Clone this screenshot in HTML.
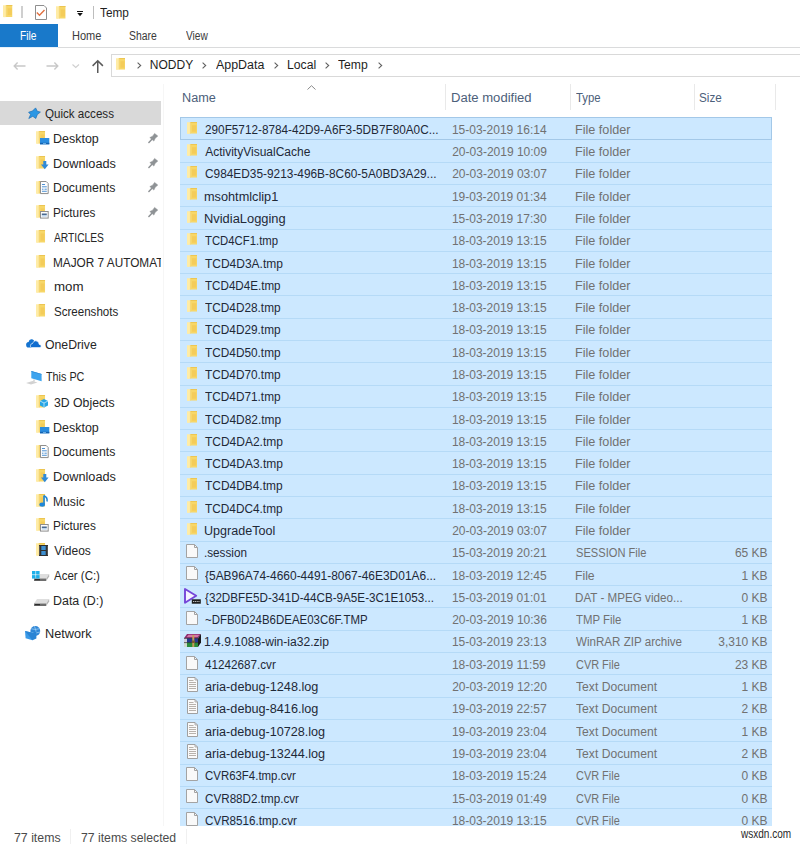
<!DOCTYPE html><html><head><meta charset="utf-8"><style>
html,body{margin:0;padding:0;background:#fff;width:800px;height:844px;overflow:hidden;position:relative}
body{font-family:"Liberation Sans",sans-serif;font-size:12px;color:#000}
.a{position:absolute}
.t{position:absolute;white-space:nowrap;line-height:14px;transform-origin:0 0}
svg.i{position:absolute;overflow:visible}

</style></head><body>
<svg width="0" height="0" style="position:absolute">
<defs>
<symbol id="fold" viewBox="0 0 10 13" preserveAspectRatio="none">
<path d="M3 0H10V12.5H3Z" fill="#f7d768"/>
<path d="M3 0H10V1H3Z" fill="#ecc552"/>
<path d="M5 3.5H9.3V10.5H5Z" fill="#f2c452" opacity=".6"/>
<path d="M0 0.3H3.5V12.5L1.2 13L0 12.6Z" fill="#ffeca6"/>
<path d="M3.4 0.3V12.5" stroke="#f0cf6c" stroke-width=".6"/>
</symbol>
<symbol id="doc" viewBox="0 0 12 14">
<path d="M0.5 0.5H8.5L11.5 3.5V13.5H0.5Z" fill="#f9f9f9" stroke="#a3a3a3" stroke-width="1"/>
<path d="M8.5 0.5V3.5H11.5" fill="none" stroke="#a3a3a3" stroke-width="1"/>
</symbol>
<symbol id="txt" viewBox="0 0 11 15">
<path d="M0.5 0.5H8L10.5 3V14.5H0.5Z" fill="#fafafa" stroke="#a0a0a0" stroke-width="1"/>
<path d="M8 0.5V3H10.5" fill="none" stroke="#a0a0a0" stroke-width=".8"/>
<path d="M2 3.5H6.5M2 5.5H9M2 7.5H9M2 9.5H9M2 11.5H9" stroke="#b8b2ac" stroke-width="1"/>
</symbol>
</defs></svg>
<div class="a" style="left:180px;top:117.10px;width:592px;height:22.79px;background:#cce8ff"></div>
<div class="a" style="left:180px;top:139.39px;width:592px;height:22.79px;background:#cce8ff"></div>
<div class="a" style="left:180px;top:161.68px;width:592px;height:22.79px;background:#cce8ff"></div>
<div class="a" style="left:180px;top:183.97px;width:592px;height:22.79px;background:#cce8ff"></div>
<div class="a" style="left:180px;top:206.26px;width:592px;height:22.79px;background:#cce8ff"></div>
<div class="a" style="left:180px;top:228.55px;width:592px;height:22.79px;background:#cce8ff"></div>
<div class="a" style="left:180px;top:250.84px;width:592px;height:22.79px;background:#cce8ff"></div>
<div class="a" style="left:180px;top:273.13px;width:592px;height:22.79px;background:#cce8ff"></div>
<div class="a" style="left:180px;top:295.42px;width:592px;height:22.79px;background:#cce8ff"></div>
<div class="a" style="left:180px;top:317.71px;width:592px;height:22.79px;background:#cce8ff"></div>
<div class="a" style="left:180px;top:340.00px;width:592px;height:22.79px;background:#cce8ff"></div>
<div class="a" style="left:180px;top:362.29px;width:592px;height:22.79px;background:#cce8ff"></div>
<div class="a" style="left:180px;top:384.58px;width:592px;height:22.79px;background:#cce8ff"></div>
<div class="a" style="left:180px;top:406.87px;width:592px;height:22.79px;background:#cce8ff"></div>
<div class="a" style="left:180px;top:429.16px;width:592px;height:22.79px;background:#cce8ff"></div>
<div class="a" style="left:180px;top:451.45px;width:592px;height:22.79px;background:#cce8ff"></div>
<div class="a" style="left:180px;top:473.74px;width:592px;height:22.79px;background:#cce8ff"></div>
<div class="a" style="left:180px;top:496.03px;width:592px;height:22.79px;background:#cce8ff"></div>
<div class="a" style="left:180px;top:518.32px;width:592px;height:22.79px;background:#cce8ff"></div>
<div class="a" style="left:180px;top:540.61px;width:592px;height:22.79px;background:#cce8ff"></div>
<div class="a" style="left:180px;top:562.90px;width:592px;height:22.79px;background:#cce8ff"></div>
<div class="a" style="left:180px;top:585.19px;width:592px;height:22.79px;background:#cce8ff"></div>
<div class="a" style="left:180px;top:607.48px;width:592px;height:22.79px;background:#cce8ff"></div>
<div class="a" style="left:180px;top:629.77px;width:592px;height:22.79px;background:#cce8ff"></div>
<div class="a" style="left:180px;top:652.06px;width:592px;height:22.79px;background:#cce8ff"></div>
<div class="a" style="left:180px;top:674.35px;width:592px;height:22.79px;background:#cce8ff"></div>
<div class="a" style="left:180px;top:696.64px;width:592px;height:22.79px;background:#cce8ff"></div>
<div class="a" style="left:180px;top:718.93px;width:592px;height:22.79px;background:#cce8ff"></div>
<div class="a" style="left:180px;top:741.22px;width:592px;height:22.79px;background:#cce8ff"></div>
<div class="a" style="left:180px;top:763.51px;width:592px;height:22.79px;background:#cce8ff"></div>
<div class="a" style="left:180px;top:785.80px;width:592px;height:22.79px;background:#cce8ff"></div>
<div class="a" style="left:180px;top:808.09px;width:592px;height:17.51px;background:#cce8ff"></div>
<div class="a" style="left:180px;top:139.39px;width:592px;height:1px;background:#b5daf7"></div>
<div class="a" style="left:180px;top:161.68px;width:592px;height:1px;background:#b5daf7"></div>
<div class="a" style="left:180px;top:183.97px;width:592px;height:1px;background:#b5daf7"></div>
<div class="a" style="left:180px;top:206.26px;width:592px;height:1px;background:#b5daf7"></div>
<div class="a" style="left:180px;top:228.55px;width:592px;height:1px;background:#b5daf7"></div>
<div class="a" style="left:180px;top:250.84px;width:592px;height:1px;background:#b5daf7"></div>
<div class="a" style="left:180px;top:273.13px;width:592px;height:1px;background:#b5daf7"></div>
<div class="a" style="left:180px;top:295.42px;width:592px;height:1px;background:#b5daf7"></div>
<div class="a" style="left:180px;top:317.71px;width:592px;height:1px;background:#b5daf7"></div>
<div class="a" style="left:180px;top:340.00px;width:592px;height:1px;background:#b5daf7"></div>
<div class="a" style="left:180px;top:362.29px;width:592px;height:1px;background:#b5daf7"></div>
<div class="a" style="left:180px;top:384.58px;width:592px;height:1px;background:#b5daf7"></div>
<div class="a" style="left:180px;top:406.87px;width:592px;height:1px;background:#b5daf7"></div>
<div class="a" style="left:180px;top:429.16px;width:592px;height:1px;background:#b5daf7"></div>
<div class="a" style="left:180px;top:451.45px;width:592px;height:1px;background:#b5daf7"></div>
<div class="a" style="left:180px;top:473.74px;width:592px;height:1px;background:#b5daf7"></div>
<div class="a" style="left:180px;top:496.03px;width:592px;height:1px;background:#b5daf7"></div>
<div class="a" style="left:180px;top:518.32px;width:592px;height:1px;background:#b5daf7"></div>
<div class="a" style="left:180px;top:540.61px;width:592px;height:1px;background:#b5daf7"></div>
<div class="a" style="left:180px;top:562.90px;width:592px;height:1px;background:#b5daf7"></div>
<div class="a" style="left:180px;top:585.19px;width:592px;height:1px;background:#b5daf7"></div>
<div class="a" style="left:180px;top:607.48px;width:592px;height:1px;background:#b5daf7"></div>
<div class="a" style="left:180px;top:629.77px;width:592px;height:1px;background:#b5daf7"></div>
<div class="a" style="left:180px;top:652.06px;width:592px;height:1px;background:#b5daf7"></div>
<div class="a" style="left:180px;top:674.35px;width:592px;height:1px;background:#b5daf7"></div>
<div class="a" style="left:180px;top:696.64px;width:592px;height:1px;background:#b5daf7"></div>
<div class="a" style="left:180px;top:718.93px;width:592px;height:1px;background:#b5daf7"></div>
<div class="a" style="left:180px;top:741.22px;width:592px;height:1px;background:#b5daf7"></div>
<div class="a" style="left:180px;top:763.51px;width:592px;height:1px;background:#b5daf7"></div>
<div class="a" style="left:180px;top:785.80px;width:592px;height:1px;background:#b5daf7"></div>
<div class="a" style="left:180px;top:808.09px;width:592px;height:1px;background:#b5daf7"></div>
<div class="a" style="left:180px;top:117.10px;width:590px;height:20.99px;border:1px solid #a3c8e8"></div>
<svg class="i" style="left:186.5px;top:121.60px" width="10" height="12"><use href="#fold"/></svg>
<div class="t" style="left:204.61px;top:122.80px;color:#1f2937;transform:scaleX(0.9804)">290F5712-8784-42D9-A6F3-5DB7F80A0C...</div>
<div class="t" style="left:451.89px;top:122.80px;color:#717171">15-03-2019 16:14</div>
<div class="t" style="left:575.26px;top:122.80px;color:#717171;transform:scaleX(1.0523)">File folder</div>
<svg class="i" style="left:186.5px;top:143.89px" width="10" height="12"><use href="#fold"/></svg>
<div class="t" style="left:205.18px;top:145.09px;color:#1f2937">ActivityVisualCache</div>
<div class="t" style="left:452.20px;top:145.09px;color:#717171">20-03-2019 10:09</div>
<div class="t" style="left:575.26px;top:145.09px;color:#717171;transform:scaleX(1.0523)">File folder</div>
<svg class="i" style="left:186.5px;top:166.18px" width="10" height="12"><use href="#fold"/></svg>
<div class="t" style="left:204.60px;top:167.38px;color:#1f2937;transform:scaleX(0.9886)">C984ED35-9213-496B-8C60-5A0BD3A29...</div>
<div class="t" style="left:452.20px;top:167.38px;color:#717171">20-03-2019 03:07</div>
<div class="t" style="left:575.26px;top:167.38px;color:#717171;transform:scaleX(1.0523)">File folder</div>
<svg class="i" style="left:186.5px;top:188.47px" width="10" height="12"><use href="#fold"/></svg>
<div class="t" style="left:204.35px;top:189.67px;color:#1f2937;transform:scaleX(1.0607)">msohtmlclip1</div>
<div class="t" style="left:451.89px;top:189.67px;color:#717171">19-03-2019 01:34</div>
<div class="t" style="left:575.26px;top:189.67px;color:#717171;transform:scaleX(1.0523)">File folder</div>
<svg class="i" style="left:186.5px;top:210.76px" width="10" height="12"><use href="#fold"/></svg>
<div class="t" style="left:204.14px;top:211.96px;color:#1f2937;transform:scaleX(1.0741)">NvidiaLogging</div>
<div class="t" style="left:451.89px;top:211.96px;color:#717171">15-03-2019 17:30</div>
<div class="t" style="left:575.26px;top:211.96px;color:#717171;transform:scaleX(1.0523)">File folder</div>
<svg class="i" style="left:186.5px;top:233.05px" width="10" height="12"><use href="#fold"/></svg>
<div class="t" style="left:204.95px;top:234.25px;color:#1f2937;transform:scaleX(0.9442)">TCD4CF1.tmp</div>
<div class="t" style="left:451.89px;top:234.25px;color:#717171">18-03-2019 13:15</div>
<div class="t" style="left:575.26px;top:234.25px;color:#717171;transform:scaleX(1.0523)">File folder</div>
<svg class="i" style="left:186.5px;top:255.34px" width="10" height="12"><use href="#fold"/></svg>
<div class="t" style="left:204.93px;top:256.54px;color:#1f2937">TCD4D3A.tmp</div>
<div class="t" style="left:451.89px;top:256.54px;color:#717171">18-03-2019 13:15</div>
<div class="t" style="left:575.26px;top:256.54px;color:#717171;transform:scaleX(1.0523)">File folder</div>
<svg class="i" style="left:186.5px;top:277.63px" width="10" height="12"><use href="#fold"/></svg>
<div class="t" style="left:204.94px;top:278.83px;color:#1f2937;transform:scaleX(0.9684)">TCD4D4E.tmp</div>
<div class="t" style="left:451.89px;top:278.83px;color:#717171">18-03-2019 13:15</div>
<div class="t" style="left:575.26px;top:278.83px;color:#717171;transform:scaleX(1.0523)">File folder</div>
<svg class="i" style="left:186.5px;top:299.92px" width="10" height="12"><use href="#fold"/></svg>
<div class="t" style="left:204.93px;top:301.12px;color:#1f2937;transform:scaleX(0.9853)">TCD4D28.tmp</div>
<div class="t" style="left:451.89px;top:301.12px;color:#717171">18-03-2019 13:15</div>
<div class="t" style="left:575.26px;top:301.12px;color:#717171;transform:scaleX(1.0523)">File folder</div>
<svg class="i" style="left:186.5px;top:322.21px" width="10" height="12"><use href="#fold"/></svg>
<div class="t" style="left:204.93px;top:323.41px;color:#1f2937;transform:scaleX(0.9853)">TCD4D29.tmp</div>
<div class="t" style="left:451.89px;top:323.41px;color:#717171">18-03-2019 13:15</div>
<div class="t" style="left:575.26px;top:323.41px;color:#717171;transform:scaleX(1.0523)">File folder</div>
<svg class="i" style="left:186.5px;top:344.50px" width="10" height="12"><use href="#fold"/></svg>
<div class="t" style="left:204.93px;top:345.70px;color:#1f2937;transform:scaleX(0.9853)">TCD4D50.tmp</div>
<div class="t" style="left:451.89px;top:345.70px;color:#717171">18-03-2019 13:15</div>
<div class="t" style="left:575.26px;top:345.70px;color:#717171;transform:scaleX(1.0523)">File folder</div>
<svg class="i" style="left:186.5px;top:366.79px" width="10" height="12"><use href="#fold"/></svg>
<div class="t" style="left:204.93px;top:367.99px;color:#1f2937;transform:scaleX(0.9853)">TCD4D70.tmp</div>
<div class="t" style="left:451.89px;top:367.99px;color:#717171">18-03-2019 13:15</div>
<div class="t" style="left:575.26px;top:367.99px;color:#717171;transform:scaleX(1.0523)">File folder</div>
<svg class="i" style="left:186.5px;top:389.08px" width="10" height="12"><use href="#fold"/></svg>
<div class="t" style="left:204.93px;top:390.28px;color:#1f2937;transform:scaleX(0.9853)">TCD4D71.tmp</div>
<div class="t" style="left:451.89px;top:390.28px;color:#717171">18-03-2019 13:15</div>
<div class="t" style="left:575.26px;top:390.28px;color:#717171;transform:scaleX(1.0523)">File folder</div>
<svg class="i" style="left:186.5px;top:411.37px" width="10" height="12"><use href="#fold"/></svg>
<div class="t" style="left:204.93px;top:412.57px;color:#1f2937;transform:scaleX(0.9919)">TCD4D82.tmp</div>
<div class="t" style="left:451.89px;top:412.57px;color:#717171">18-03-2019 13:15</div>
<div class="t" style="left:575.26px;top:412.57px;color:#717171;transform:scaleX(1.0523)">File folder</div>
<svg class="i" style="left:186.5px;top:433.66px" width="10" height="12"><use href="#fold"/></svg>
<div class="t" style="left:204.93px;top:434.86px;color:#1f2937">TCD4DA2.tmp</div>
<div class="t" style="left:451.89px;top:434.86px;color:#717171">18-03-2019 13:15</div>
<div class="t" style="left:575.26px;top:434.86px;color:#717171;transform:scaleX(1.0523)">File folder</div>
<svg class="i" style="left:186.5px;top:455.95px" width="10" height="12"><use href="#fold"/></svg>
<div class="t" style="left:204.93px;top:457.15px;color:#1f2937">TCD4DA3.tmp</div>
<div class="t" style="left:451.89px;top:457.15px;color:#717171">18-03-2019 13:15</div>
<div class="t" style="left:575.26px;top:457.15px;color:#717171;transform:scaleX(1.0523)">File folder</div>
<svg class="i" style="left:186.5px;top:478.24px" width="10" height="12"><use href="#fold"/></svg>
<div class="t" style="left:204.93px;top:479.44px;color:#1f2937;transform:scaleX(0.9943)">TCD4DB4.tmp</div>
<div class="t" style="left:451.89px;top:479.44px;color:#717171">18-03-2019 13:15</div>
<div class="t" style="left:575.26px;top:479.44px;color:#717171;transform:scaleX(1.0523)">File folder</div>
<svg class="i" style="left:186.5px;top:500.53px" width="10" height="12"><use href="#fold"/></svg>
<div class="t" style="left:204.93px;top:501.73px;color:#1f2937;transform:scaleX(0.9858)">TCD4DC4.tmp</div>
<div class="t" style="left:451.89px;top:501.73px;color:#717171">18-03-2019 13:15</div>
<div class="t" style="left:575.26px;top:501.73px;color:#717171;transform:scaleX(1.0523)">File folder</div>
<svg class="i" style="left:186.5px;top:522.82px" width="10" height="12"><use href="#fold"/></svg>
<div class="t" style="left:204.23px;top:524.02px;color:#1f2937;transform:scaleX(1.0466)">UpgradeTool</div>
<div class="t" style="left:452.20px;top:524.02px;color:#717171">20-03-2019 03:07</div>
<div class="t" style="left:575.26px;top:524.02px;color:#717171;transform:scaleX(1.0523)">File folder</div>
<svg class="i" style="left:186.4px;top:544.11px" width="12" height="14"><use href="#doc"/></svg>
<div class="t" style="left:204.13px;top:546.31px;color:#1f2937;transform:scaleX(0.9752)">.session</div>
<div class="t" style="left:451.89px;top:546.31px;color:#717171">15-03-2019 20:21</div>
<div class="t" style="left:575.80px;top:546.31px;color:#717171;transform:scaleX(0.9261)">SESSION File</div>
<div class="t" style="left:734.94px;top:546.31px;color:#717171">65 KB</div>
<svg class="i" style="left:186.4px;top:566.40px" width="12" height="14"><use href="#doc"/></svg>
<div class="t" style="left:205.00px;top:568.60px;color:#1f2937;transform:scaleX(0.9953)">{5AB96A74-4660-4491-8067-46E3D01A6...</div>
<div class="t" style="left:451.89px;top:568.60px;color:#717171">18-03-2019 12:45</div>
<div class="t" style="left:575.30px;top:568.60px;color:#717171;transform:scaleX(1.0158)">File</div>
<div class="t" style="left:741.62px;top:568.60px;color:#717171">1 KB</div>
<svg class="i" style="left:184px;top:588.39px" width="17" height="16" viewBox="0 0 17 16"><path d="M1 1L12.2 7.8L1 14.8Z" fill="#f6f2ff" stroke="#7546d8" stroke-width="1.9" stroke-linejoin="round"/><rect x="7.8" y="11.3" width="9" height="4.4" fill="#1c1c1c"/><path d="M9 13.5H15.5" stroke="#bbb" stroke-width="1" stroke-dasharray="1.2 .6"/></svg>
<div class="t" style="left:205.01px;top:590.89px;color:#1f2937;transform:scaleX(0.9720)">{32DBFE5D-341D-44CB-9A5E-3C1E1053...</div>
<div class="t" style="left:451.89px;top:590.89px;color:#717171">15-03-2019 01:01</div>
<div class="t" style="left:575.34px;top:590.89px;color:#717171;transform:scaleX(0.9705)">DAT - MPEG video...</div>
<div class="t" style="left:741.62px;top:590.89px;color:#717171">0 KB</div>
<svg class="i" style="left:186.4px;top:610.98px" width="12" height="14"><use href="#doc"/></svg>
<div class="t" style="left:204.69px;top:613.18px;color:#1f2937;transform:scaleX(0.9545)">~DFB0D24B6DEAE03C6F.TMP</div>
<div class="t" style="left:452.20px;top:613.18px;color:#717171">20-03-2019 10:36</div>
<div class="t" style="left:576.04px;top:613.18px;color:#717171;transform:scaleX(0.9471)">TMP File</div>
<div class="t" style="left:741.62px;top:613.18px;color:#717171">1 KB</div>
<svg class="i" style="left:184px;top:634.17px" width="17" height="13" viewBox="0 0 17 13"><path d="M3 0H17L14 4.3H0Z" fill="#8c2a6e"/><path d="M4.5 0.8H15.5L13.5 3.2H2.5Z" fill="#d276a8"/><path d="M0 4.3H14V8.6H0Z" fill="#24378e"/><path d="M0 8.6H14V13H0Z" fill="#2a8c3c"/><path d="M14 4.3L17 0V8.5L14 13Z" fill="#1a1a1a"/><path d="M0 4.3H3V13H0Z" fill="#ece8e8" opacity=".85"/><path d="M0 8.6H14M0 4.3H14" stroke="#111" stroke-width=".6"/><rect x="8.3" y="1" width="2" height="12" fill="#c49a58"/><rect x="7.8" y="6.5" width="3" height="2.5" fill="#7a5a30"/></svg>
<div class="t" style="left:204.28px;top:635.47px;color:#1f2937;transform:scaleX(1.0077)">1.4.9.1088-win-ia32.zip</div>
<div class="t" style="left:451.89px;top:635.47px;color:#717171">15-03-2019 23:13</div>
<div class="t" style="left:576.25px;top:635.47px;color:#717171;transform:scaleX(0.9659)">WinRAR ZIP archive</div>
<div class="t" style="left:718.26px;top:635.47px;color:#717171">3,310 KB</div>
<svg class="i" style="left:186.4px;top:655.56px" width="12" height="14"><use href="#doc"/></svg>
<div class="t" style="left:204.93px;top:657.76px;color:#1f2937;transform:scaleX(0.9744)">41242687.cvr</div>
<div class="t" style="left:451.89px;top:657.76px;color:#717171">18-03-2019 11:59</div>
<div class="t" style="left:575.74px;top:657.76px;color:#717171;transform:scaleX(0.9112)">CVR File</div>
<div class="t" style="left:734.94px;top:657.76px;color:#717171">23 KB</div>
<svg class="i" style="left:187px;top:676.95px" width="11" height="15"><use href="#txt"/></svg>
<div class="t" style="left:204.66px;top:680.05px;color:#1f2937;transform:scaleX(1.0553)">aria-debug-1248.log</div>
<div class="t" style="left:452.20px;top:680.05px;color:#717171">20-03-2019 12:20</div>
<div class="t" style="left:576.03px;top:680.05px;color:#717171;transform:scaleX(1.0123)">Text Document</div>
<div class="t" style="left:741.62px;top:680.05px;color:#717171">1 KB</div>
<svg class="i" style="left:187px;top:699.24px" width="11" height="15"><use href="#txt"/></svg>
<div class="t" style="left:204.66px;top:702.34px;color:#1f2937;transform:scaleX(1.0553)">aria-debug-8416.log</div>
<div class="t" style="left:451.89px;top:702.34px;color:#717171">19-03-2019 22:57</div>
<div class="t" style="left:576.03px;top:702.34px;color:#717171;transform:scaleX(1.0123)">Text Document</div>
<div class="t" style="left:741.62px;top:702.34px;color:#717171">2 KB</div>
<svg class="i" style="left:187px;top:721.53px" width="11" height="15"><use href="#txt"/></svg>
<div class="t" style="left:204.66px;top:724.63px;color:#1f2937;transform:scaleX(1.0531)">aria-debug-10728.log</div>
<div class="t" style="left:451.89px;top:724.63px;color:#717171">19-03-2019 23:04</div>
<div class="t" style="left:576.03px;top:724.63px;color:#717171;transform:scaleX(1.0123)">Text Document</div>
<div class="t" style="left:741.62px;top:724.63px;color:#717171">1 KB</div>
<svg class="i" style="left:187px;top:743.82px" width="11" height="15"><use href="#txt"/></svg>
<div class="t" style="left:204.66px;top:746.92px;color:#1f2937;transform:scaleX(1.0531)">aria-debug-13244.log</div>
<div class="t" style="left:451.89px;top:746.92px;color:#717171">19-03-2019 23:04</div>
<div class="t" style="left:576.03px;top:746.92px;color:#717171;transform:scaleX(1.0123)">Text Document</div>
<div class="t" style="left:741.62px;top:746.92px;color:#717171">2 KB</div>
<svg class="i" style="left:186.4px;top:767.01px" width="12" height="14"><use href="#doc"/></svg>
<div class="t" style="left:204.62px;top:769.21px;color:#1f2937;transform:scaleX(0.9530)">CVR63F4.tmp.cvr</div>
<div class="t" style="left:451.89px;top:769.21px;color:#717171">18-03-2019 15:24</div>
<div class="t" style="left:575.74px;top:769.21px;color:#717171;transform:scaleX(0.9112)">CVR File</div>
<div class="t" style="left:741.62px;top:769.21px;color:#717171">0 KB</div>
<svg class="i" style="left:186.4px;top:789.30px" width="12" height="14"><use href="#doc"/></svg>
<div class="t" style="left:204.61px;top:791.50px;color:#1f2937;transform:scaleX(0.9720)">CVR88D2.tmp.cvr</div>
<div class="t" style="left:451.89px;top:791.50px;color:#717171">15-03-2019 01:49</div>
<div class="t" style="left:575.74px;top:791.50px;color:#717171;transform:scaleX(0.9112)">CVR File</div>
<div class="t" style="left:741.62px;top:791.50px;color:#717171">0 KB</div>
<svg class="i" style="left:186.4px;top:811.59px" width="12" height="14"><use href="#doc"/></svg>
<div class="t" style="left:204.61px;top:813.79px;color:#1f2937;transform:scaleX(0.9703)">CVR8516.tmp.cvr</div>
<div class="t" style="left:451.89px;top:813.79px;color:#717171">18-03-2019 13:15</div>
<div class="t" style="left:575.74px;top:813.79px;color:#717171;transform:scaleX(0.9112)">CVR File</div>
<div class="t" style="left:741.62px;top:813.79px;color:#717171">0 KB</div>
<div class="t" style="left:181.96px;top:91.20px;color:#4c607a;transform:scaleX(1.0560)">Name</div>
<div class="t" style="left:451.43px;top:91.20px;color:#4c607a;transform:scaleX(1.0888)">Date modified</div>
<div class="t" style="left:575.95px;top:91.20px;color:#4c607a;transform:scaleX(0.9430)">Type</div>
<div class="t" style="left:699.47px;top:91.20px;color:#4c607a;transform:scaleX(0.9746)">Size</div>
<div class="a" style="left:445px;top:84px;width:1px;height:26px;background:#e9e9e9"></div>
<div class="a" style="left:569.5px;top:84px;width:1px;height:26px;background:#e9e9e9"></div>
<div class="a" style="left:693.5px;top:84px;width:1px;height:26px;background:#e9e9e9"></div>
<div class="a" style="left:775px;top:84px;width:1px;height:26px;background:#e9e9e9"></div>
<svg class="i" style="left:306.5px;top:84.5px" width="9" height="5" viewBox="0 0 9 5"><path d="M0.5 4.5L4.5 0.7L8.5 4.5" fill="none" stroke="#8a8a8a" stroke-width="1"/></svg>
<svg class="i" style="left:2.8px;top:5px" width="9.5" height="12.5"><use href="#fold"/></svg>
<div class="a" style="left:21.2px;top:6px;width:1.4px;height:12.4px;background:#cfcfcf"></div>
<svg class="i" style="left:35px;top:5px" width="12" height="15" viewBox="0 0 12 15"><path d="M0.5 0.5H9L11.5 3V14.5H0.5Z" fill="#fff" stroke="#8e8e8e"/><path d="M1.8 7.5L4.5 10.2L9.5 5" fill="none" stroke="#e07040" stroke-width="1.4"/></svg>
<svg class="i" style="left:56px;top:5.6px" width="9.7" height="13"><use href="#fold"/></svg>
<svg class="i" style="left:76.9px;top:10.9px" width="6" height="6" viewBox="0 0 6 6"><rect x="0" y="0" width="6" height="1" fill="#111"/><path d="M0.3 1.9H5.7L3 5.2Z" fill="#111"/></svg>
<div class="a" style="left:93px;top:6px;width:1.2px;height:12.7px;background:#bdbdbd"></div>
<div class="t" style="left:100.33px;top:5.80px;color:#1e1e1e;transform:scaleX(0.9833)">Temp</div>
<div class="a" style="left:0;top:24px;width:58px;height:23px;background:#1979ca"></div>
<div class="t" style="left:20.16px;top:29.00px;color:#ffffff;transform:scaleX(0.8531)">File</div>
<div class="t" style="left:71.50px;top:29.00px;color:#3b3b3b;transform:scaleX(0.9183)">Home</div>
<div class="t" style="left:129.13px;top:29.00px;color:#3b3b3b;transform:scaleX(0.8661)">Share</div>
<div class="t" style="left:185.96px;top:29.00px;color:#3b3b3b;transform:scaleX(0.8466)">View</div>
<div class="a" style="left:58px;top:47px;width:742px;height:1px;background:#dadbdc"></div><div class="a" style="left:0;top:47px;width:58px;height:1px;background:#e6f1fa"></div>
<svg class="i" style="left:13px;top:62px" width="13" height="8" viewBox="0 0 13 8"><path d="M12.5 4H1.2M4.6 0.6L1.2 4L4.6 7.4" fill="none" stroke="#c8c8c8" stroke-width="1.4"/></svg>
<svg class="i" style="left:45.5px;top:62px" width="13" height="8" viewBox="0 0 13 8"><path d="M0.5 4H11.8M8.4 0.6L11.8 4L8.4 7.4" fill="none" stroke="#c8c8c8" stroke-width="1.4"/></svg>
<svg class="i" style="left:72.4px;top:63.9px" width="7.5" height="4" viewBox="0 0 7.5 4"><path d="M0.5 0.5L3.75 3.5L7 0.5" fill="none" stroke="#cfcfcf" stroke-width="1.1"/></svg>
<svg class="i" style="left:91.7px;top:60px" width="11.5" height="13" viewBox="0 0 11.5 13"><path d="M5.75 13V1M0.6 5.9L5.75 0.8L10.9 5.9" fill="none" stroke="#5a5a5a" stroke-width="1.5"/></svg>
<div class="a" style="left:111px;top:54px;width:700px;height:21px;border:1px solid #d9d9d9"></div>
<svg class="i" style="left:116.1px;top:58.1px" width="9.1" height="12"><use href="#fold"/></svg>
<svg class="i" style="left:137.4px;top:61.6px" width="4.5" height="7" viewBox="0 0 4.5 7"><path d="M0.6 0.6L3.7 3.5L0.6 6.4" fill="none" stroke="#606060" stroke-width="1.1"/></svg>
<svg class="i" style="left:202.4px;top:61.6px" width="4.5" height="7" viewBox="0 0 4.5 7"><path d="M0.6 0.6L3.7 3.5L0.6 6.4" fill="none" stroke="#606060" stroke-width="1.1"/></svg>
<svg class="i" style="left:274px;top:61.6px" width="4.5" height="7" viewBox="0 0 4.5 7"><path d="M0.6 0.6L3.7 3.5L0.6 6.4" fill="none" stroke="#606060" stroke-width="1.1"/></svg>
<svg class="i" style="left:325px;top:61.6px" width="4.5" height="7" viewBox="0 0 4.5 7"><path d="M0.6 0.6L3.7 3.5L0.6 6.4" fill="none" stroke="#606060" stroke-width="1.1"/></svg>
<svg class="i" style="left:378.4px;top:61.6px" width="4.5" height="7" viewBox="0 0 4.5 7"><path d="M0.6 0.6L3.7 3.5L0.6 6.4" fill="none" stroke="#606060" stroke-width="1.1"/></svg>
<div class="t" style="left:149.81px;top:58.20px;color:#1e1e1e">NODDY</div>
<div class="t" style="left:215.98px;top:58.20px;color:#1e1e1e;transform:scaleX(1.0348)">AppData</div>
<div class="t" style="left:286.60px;top:58.20px;color:#1e1e1e;transform:scaleX(1.0186)">Local</div>
<div class="t" style="left:338.23px;top:58.20px;color:#1e1e1e;transform:scaleX(1.0134)">Temp</div>
<div class="a" style="left:0;top:101px;width:161px;height:24px;background:#d9d9d9"></div>
<div class="a" style="left:162.5px;top:84px;width:1px;height:742px;background:#f6f6f6"></div>
<div class="t" style="left:45.15px;top:107.00px;color:#262626;transform:scaleX(0.9665)">Quick access</div>
<svg class="i" style="left:0;top:0" width="50" height="130" viewBox="0 0 50 130"><path d="M35.6 107.9L37.3 111.3L40.4 112.1L37.3 114.6L35.8 118.5L32.8 116.3L28.8 118.5L30.6 114.5L28.6 112.2L32.4 111.1Z" fill="#2c97e4" stroke="#1c6eb4" stroke-width=".7" stroke-linejoin="round"/></svg>
<div class="t" style="left:53.38px;top:131.80px;color:#262626;transform:scaleX(1.0392)">Desktop</div>
<svg class="i" style="left:36px;top:131.00px" width="9.2" height="13" preserveAspectRatio="none"><use href="#fold"/></svg>
<svg class="i" style="left:39.6px;top:137.80px" width="9.3" height="6.3" viewBox="0 0 9.3 6.3"><rect x="0" y="0" width="9.3" height="6.3" fill="#2a8de0"/><rect x="0" y="4.8" width="9.3" height="1.5" fill="#1462b0"/><rect x="3" y="5.2" width="3" height=".8" fill="#7fc0f0"/></svg>
<svg class="i" style="left:147.8px;top:132.90px" width="10" height="10" viewBox="0 0 10 10"><path d="M0.9 9.4L3.9 6.3" stroke="#8e9295" stroke-width="1.5" stroke-linecap="round"/><path d="M1.8 4.6L4.6 3.2L6.6 0.4L9.8 3.1L7.2 5.3L5.9 8.1Z" fill="#8e9295" stroke="#8e9295" stroke-width=".5" stroke-linejoin="round"/></svg>
<div class="t" style="left:53.36px;top:156.50px;color:#262626;transform:scaleX(1.0595)">Downloads</div>
<svg class="i" style="left:36px;top:155.70px" width="9.2" height="13" preserveAspectRatio="none"><use href="#fold"/></svg>
<svg class="i" style="left:41.3px;top:160.70px" width="7.6" height="8.2" viewBox="0 0 7.6 8.2"><path d="M2.3 0H5.3V3.6H7.6L3.8 8.2L0 3.6H2.3Z" fill="#2f8ad8"/></svg>
<svg class="i" style="left:147.8px;top:157.60px" width="10" height="10" viewBox="0 0 10 10"><path d="M0.9 9.4L3.9 6.3" stroke="#8e9295" stroke-width="1.5" stroke-linecap="round"/><path d="M1.8 4.6L4.6 3.2L6.6 0.4L9.8 3.1L7.2 5.3L5.9 8.1Z" fill="#8e9295" stroke="#8e9295" stroke-width=".5" stroke-linejoin="round"/></svg>
<div class="t" style="left:53.39px;top:181.30px;color:#262626;transform:scaleX(1.0274)">Documents</div>
<svg class="i" style="left:36px;top:180.50px" width="9.2" height="13" preserveAspectRatio="none"><use href="#fold"/></svg>
<svg class="i" style="left:40.2px;top:181.40px" width="8.7" height="13.1" viewBox="0 0 8.7 13.1"><path d="M0.5 0.5H6.2L8.2 2.5V12.6H0.5Z" fill="#fdfdfd" stroke="#8e8e8e"/><path d="M2 3.5H5M2 5.8H6.8M2 8.2H3.5M4.5 8.2H6.8M2 10.3H6.8" stroke="#3a86d0" stroke-width=".9"/></svg>
<svg class="i" style="left:147.8px;top:182.40px" width="10" height="10" viewBox="0 0 10 10"><path d="M0.9 9.4L3.9 6.3" stroke="#8e9295" stroke-width="1.5" stroke-linecap="round"/><path d="M1.8 4.6L4.6 3.2L6.6 0.4L9.8 3.1L7.2 5.3L5.9 8.1Z" fill="#8e9295" stroke="#8e9295" stroke-width=".5" stroke-linejoin="round"/></svg>
<div class="t" style="left:53.44px;top:206.00px;color:#262626;transform:scaleX(0.9802)">Pictures</div>
<svg class="i" style="left:36px;top:205.20px" width="9.2" height="13" preserveAspectRatio="none"><use href="#fold"/></svg>
<svg class="i" style="left:40.2px;top:210.90px" width="8.7" height="7.6" viewBox="0 0 8.7 7.6"><rect x="0.5" y="0.5" width="7.7" height="6.6" fill="#fdfdfd" stroke="#8e8e8e"/><rect x="1.8" y="2.5" width="5" height="1.6" fill="#4a6a90"/><rect x="1.8" y="4.3" width="5" height="1.2" fill="#a8c8e8"/></svg>
<svg class="i" style="left:147.8px;top:207.10px" width="10" height="10" viewBox="0 0 10 10"><path d="M0.9 9.4L3.9 6.3" stroke="#8e9295" stroke-width="1.5" stroke-linecap="round"/><path d="M1.8 4.6L4.6 3.2L6.6 0.4L9.8 3.1L7.2 5.3L5.9 8.1Z" fill="#8e9295" stroke="#8e9295" stroke-width=".5" stroke-linejoin="round"/></svg>
<div class="t" style="left:54.38px;top:230.80px;color:#262626;transform:scaleX(0.8536)">ARTICLES</div>
<svg class="i" style="left:36px;top:230.00px" width="9.2" height="13" preserveAspectRatio="none"><use href="#fold"/></svg>
<div class="a" style="left:0;top:252.60px;width:161px;height:18px;overflow:hidden">
<div class="t" style="left:53.43px;top:3px;color:#262626;transform:scaleX(0.9833)">MAJOR 7 AUTOMAT</div></div>
<svg class="i" style="left:36px;top:254.80px" width="9.2" height="13" preserveAspectRatio="none"><use href="#fold"/></svg>
<div class="t" style="left:53.52px;top:280.40px;color:#262626;transform:scaleX(1.1085)">mom</div>
<svg class="i" style="left:36px;top:279.60px" width="9.2" height="13" preserveAspectRatio="none"><use href="#fold"/></svg>
<div class="t" style="left:53.88px;top:304.80px;color:#262626;transform:scaleX(0.9631)">Screenshots</div>
<svg class="i" style="left:36px;top:304.00px" width="9.2" height="13" preserveAspectRatio="none"><use href="#fold"/></svg>
<div class="t" style="left:45.02px;top:337.75px;color:#262626;transform:scaleX(1.0215)">OneDrive</div>
<svg class="i" style="left:25.6px;top:338.2px" width="15.2" height="9.6" viewBox="0 0 15.2 9.6"><path d="M1.5 9.6H6Q4.5 8.2 5.6 6.3Q6.8 4.6 9 4.8Q8.2 1 5.3 1.2Q3 1.4 2.6 4Q0 4.3 0.1 7Q0.3 9.4 1.5 9.6Z" fill="#1473d0"/><path d="M5.2 9.6H14Q15.3 9.4 15.2 8Q15 6.3 13.2 6.4Q12.6 2.6 9.5 2.8Q7.3 3 6.6 5.4Q4.4 5.6 4.4 7.8Q4.5 9.3 5.2 9.6Z" fill="#0f6ccf" stroke="#fff" stroke-width=".6"/></svg>
<div class="t" style="left:46.01px;top:370.25px;color:#262626;transform:scaleX(0.8999)">This PC</div>
<svg class="i" style="left:25.6px;top:370.9px" width="16" height="13.5" viewBox="0 0 16 13.5"><path d="M5.3 0L15.6 3V10.3L5.3 7.3Z" fill="#3ea4ee"/><path d="M5.3 0L15.6 3V3.6L5.3 0.7Z" fill="#2a86d2"/><path d="M0 12L6.5 10L11.5 11.6L5 13.5Z" fill="#d2d2d2"/><path d="M8 8.5V10.5" stroke="#bbb" stroke-width="1"/></svg>
<div class="t" style="left:53.53px;top:395.60px;color:#262626;transform:scaleX(1.0220)">3D Objects</div>
<svg class="i" style="left:36px;top:394.80px" width="9.2" height="13" preserveAspectRatio="none"><use href="#fold"/></svg>
<svg class="i" style="left:40.3px;top:399.10px" width="8" height="8.5" viewBox="0 0 8 8.5"><path d="M4 0L8 2V6.5L4 8.5L0 6.5V2Z" fill="#27a4e4"/><path d="M0 2L4 4L8 2M4 4V8.5" fill="none" stroke="#c8ecfc" stroke-width=".8"/></svg>
<div class="t" style="left:53.38px;top:420.60px;color:#262626;transform:scaleX(1.0392)">Desktop</div>
<svg class="i" style="left:36px;top:419.80px" width="9.2" height="13" preserveAspectRatio="none"><use href="#fold"/></svg>
<svg class="i" style="left:39.6px;top:426.60px" width="9.3" height="6.3" viewBox="0 0 9.3 6.3"><rect x="0" y="0" width="9.3" height="6.3" fill="#2a8de0"/><rect x="0" y="4.8" width="9.3" height="1.5" fill="#1462b0"/><rect x="3" y="5.2" width="3" height=".8" fill="#7fc0f0"/></svg>
<div class="t" style="left:53.39px;top:445.30px;color:#262626;transform:scaleX(1.0274)">Documents</div>
<svg class="i" style="left:36px;top:444.50px" width="9.2" height="13" preserveAspectRatio="none"><use href="#fold"/></svg>
<svg class="i" style="left:40.2px;top:445.40px" width="8.7" height="13.1" viewBox="0 0 8.7 13.1"><path d="M0.5 0.5H6.2L8.2 2.5V12.6H0.5Z" fill="#fdfdfd" stroke="#8e8e8e"/><path d="M2 3.5H5M2 5.8H6.8M2 8.2H3.5M4.5 8.2H6.8M2 10.3H6.8" stroke="#3a86d0" stroke-width=".9"/></svg>
<div class="t" style="left:53.36px;top:469.80px;color:#262626;transform:scaleX(1.0595)">Downloads</div>
<svg class="i" style="left:36px;top:469.00px" width="9.2" height="13" preserveAspectRatio="none"><use href="#fold"/></svg>
<svg class="i" style="left:41.3px;top:474.00px" width="7.6" height="8.2" viewBox="0 0 7.6 8.2"><path d="M2.3 0H5.3V3.6H7.6L3.8 8.2L0 3.6H2.3Z" fill="#2f8ad8"/></svg>
<div class="t" style="left:53.40px;top:494.50px;color:#262626;transform:scaleX(1.0121)">Music</div>
<svg class="i" style="left:36px;top:493.70px" width="9.2" height="13" preserveAspectRatio="none"><use href="#fold"/></svg>
<svg class="i" style="left:38.5px;top:495.00px" width="9" height="12" viewBox="0 0 9 12"><path d="M5 0.5V9.5" stroke="#1e86d8" stroke-width="1.6"/><ellipse cx="3.2" cy="9.6" rx="2.8" ry="2.2" fill="#1e86d8"/><path d="M5 0.8Q8.8 2.5 8 6.5" fill="none" stroke="#1e86d8" stroke-width="1.5"/></svg>
<div class="t" style="left:53.43px;top:519.20px;color:#262626;transform:scaleX(0.9874)">Pictures</div>
<svg class="i" style="left:36px;top:518.40px" width="9.2" height="13" preserveAspectRatio="none"><use href="#fold"/></svg>
<svg class="i" style="left:40.2px;top:524.10px" width="8.7" height="7.6" viewBox="0 0 8.7 7.6"><rect x="0.5" y="0.5" width="7.7" height="6.6" fill="#fdfdfd" stroke="#8e8e8e"/><rect x="1.8" y="2.5" width="5" height="1.6" fill="#4a6a90"/><rect x="1.8" y="4.3" width="5" height="1.2" fill="#a8c8e8"/></svg>
<div class="t" style="left:54.35px;top:544.00px;color:#262626">Videos</div>
<svg class="i" style="left:36px;top:543.20px" width="9.2" height="13" preserveAspectRatio="none"><use href="#fold"/></svg>
<svg class="i" style="left:39px;top:545.00px" width="9" height="11" viewBox="0 0 9 11"><rect x="0" y="0" width="9" height="11" fill="#2f2f2f"/><rect x="2.3" y="1" width="4.4" height="4" fill="#3d8fd0"/><rect x="2.3" y="6" width="4.4" height="4" fill="#3d8fd0"/><path d="M0.6 1.5V10M8.4 1.5V10" stroke="#aaa" stroke-width=".7" stroke-dasharray="1 1"/></svg>
<div class="t" style="left:54.18px;top:569.00px;color:#262626;transform:scaleX(0.9570)">Acer (C:)</div>
<svg class="i" style="left:33.8px;top:574.40px" width="15.2" height="7" viewBox="0 0 15.2 7"><path d="M3 0H15.2L12.2 4.5H0Z" fill="#dedede"/><path d="M0 4.5H12.2V7H0Z" fill="#6e6e6e"/><path d="M12.2 4.5L15.2 0V2.5L12.2 7Z" fill="#b4b4b4"/><rect x="1" y="5.2" width="5" height="1" fill="#1e1e1e"/></svg>
<svg class="i" style="left:32.4px;top:570.70px" width="7.6" height="7.6" viewBox="0 0 7.6 7.6"><rect x="0" y="0" width="3.5" height="3.5" fill="#1eb0ea"/><rect x="4.1" y="0" width="3.5" height="3.5" fill="#1eb0ea"/><rect x="0" y="4.1" width="3.5" height="3.5" fill="#1eb0ea"/><rect x="4.1" y="4.1" width="3.5" height="3.5" fill="#1eb0ea"/></svg>
<div class="t" style="left:53.38px;top:594.00px;color:#262626;transform:scaleX(1.0352)">Data (D:)</div>
<svg class="i" style="left:33.8px;top:599.40px" width="15.2" height="7" viewBox="0 0 15.2 7"><path d="M3 0H15.2L12.2 4.5H0Z" fill="#dedede"/><path d="M0 4.5H12.2V7H0Z" fill="#6e6e6e"/><path d="M12.2 4.5L15.2 0V2.5L12.2 7Z" fill="#b4b4b4"/><rect x="1" y="5.2" width="5" height="1" fill="#1e1e1e"/></svg>
<div class="t" style="left:45.21px;top:626.50px;color:#262626;transform:scaleX(1.0606)">Network</div>
<svg class="i" style="left:25.3px;top:625.7px" width="15.2" height="14.2" viewBox="0 0 15.2 14.2"><circle cx="10.3" cy="5" r="4.9" fill="#2f86d6"/><path d="M6.2 2.8Q10 4.2 15 2.6M6 6.5Q10 8 15.1 6M9.5 0.2Q12 5 10.5 9.8" stroke="#a8d6f8" stroke-width=".7" fill="none"/><path d="M0 5L7.5 6.8V14.2L0.6 12.3Z" fill="#3a9ae8"/><path d="M0 5L7.5 6.8L11.4 5.3V12.5L7.5 14.2" fill="#2a84d4"/></svg>
<div class="t" style="left:13.87px;top:831.00px;color:#4a4a4a;transform:scaleX(1.0270)">77 items</div>
<div class="a" style="left:70px;top:829px;width:1px;height:15px;background:#f0f0f0"></div>
<div class="t" style="left:80.67px;top:831.00px;color:#4a4a4a;transform:scaleX(1.0186)">77 items selected</div>
<div class="a" style="left:186px;top:829px;width:1px;height:15px;background:#f0f0f0"></div>
<div class="t" style="left:740.51px;top:827.28px;color:#2a2a2a;font-size:13px;transform:scaleX(0.7713)">wsxdn.com</div>
</body></html>
